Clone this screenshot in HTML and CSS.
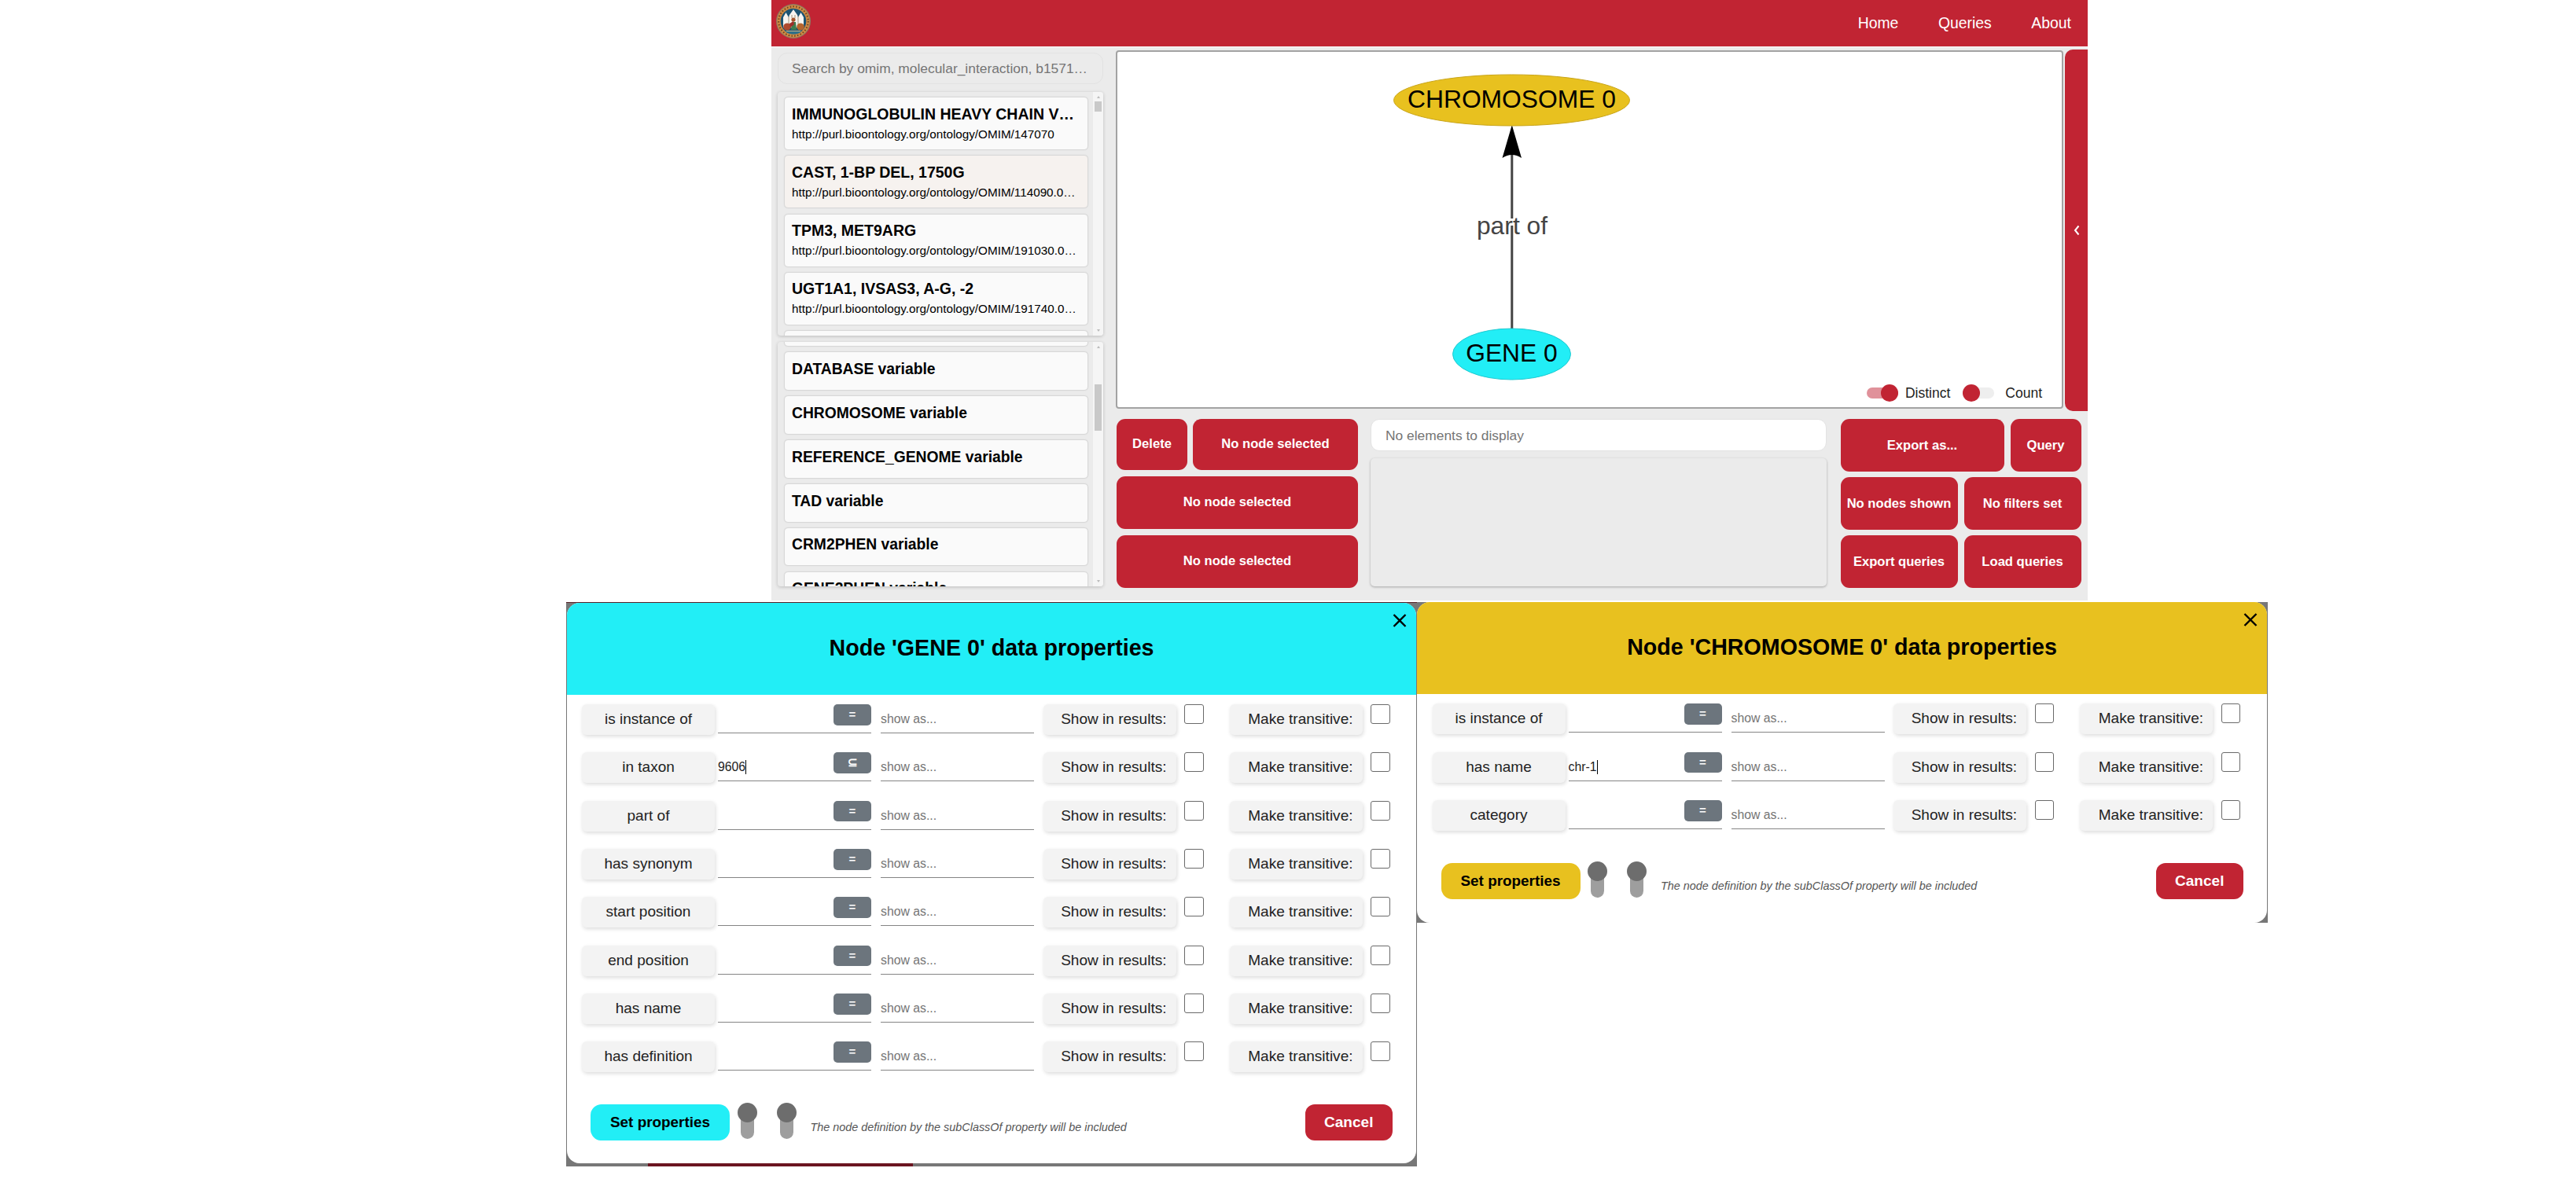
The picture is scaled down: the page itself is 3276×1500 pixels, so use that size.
FILE: index.html
```html
<!DOCTYPE html>
<html lang="en">
<head>
<meta charset="utf-8">
<title>Query builder</title>
<link rel="stylesheet" href="styles.css">
</head>
<body>
<div class="app">
  <header class="topbar">
    <svg class="logo" viewBox="0 0 44 44">
      <circle cx="22" cy="22" r="22" fill="#8d7a63"/>
      <circle cx="22" cy="22" r="20.8" fill="#d08a42"/>
      <circle cx="22" cy="22" r="18.8" fill="none" stroke="#6b4526" stroke-width="2" stroke-dasharray="1.6 2.2"/>
      <circle cx="22" cy="22" r="16.3" fill="#1d5573"/>
      <path d="M9 30V17l3.500-6 3.500 6 1-3 5-7 5 7 1 3 3.500-6 3.500 6v13z" fill="#f7f5f0"/>
      <path d="M16 16v10M28 16v10M20 14v4M24 14v4" stroke="#a9967c" stroke-width="1"/>
      <circle cx="22" cy="20" r="2.600" fill="#a5562c"/>
      <ellipse cx="14" cy="29" rx="4.800" ry="4.500" fill="#b04a2e"/>
      <ellipse cx="31" cy="29" rx="4.800" ry="4.500" fill="#b5662e"/>
      <path d="M19 33l1-10h5l1 10z" fill="#3f7d4e"/>
      <path d="M17 25l5-3 1 4-5 4z" fill="#9e2f2a"/>
      <path d="M11 34h22c-3 3.500-6 4.500-11 4.500s-8-1-11-4.500z" fill="#2f7088"/>
      <path d="M13 34.500h18" stroke="#c9b48a" stroke-width="1"/>
    </svg>
    <nav class="menu"><a>Home</a><a>Queries</a><a>About</a></nav>
  </header>
  <div class="workspace">
    <aside class="sidebar">
      <div class="search">Search by omim, molecular_interaction, b1571…</div>
      <div class="list results">
        <div class="cards">
          <div class="card"><b>IMMUNOGLOBULIN HEAVY CHAIN V…</b><span>http://purl.bioontology.org/ontology/OMIM/147070</span></div>
          <div class="card hover"><b>CAST, 1-BP DEL, 1750G</b><span>http://purl.bioontology.org/ontology/OMIM/114090.0…</span></div>
          <div class="card"><b>TPM3, MET9ARG</b><span>http://purl.bioontology.org/ontology/OMIM/191030.0…</span></div>
          <div class="card"><b>UGT1A1, IVSAS3, A-G, -2</b><span>http://purl.bioontology.org/ontology/OMIM/191740.0…</span></div>
          <div class="card"></div>
        </div>
        <div class="scroll"><i class="up"></i><i class="thumb"></i><i class="down"></i></div>
      </div>
      <div class="list variables">
        <div class="cards">
          <div class="card"></div>
          <div class="card"><b>DATABASE variable</b></div>
          <div class="card"><b>CHROMOSOME variable</b></div>
          <div class="card"><b>REFERENCE_GENOME variable</b></div>
          <div class="card"><b>TAD variable</b></div>
          <div class="card"><b>CRM2PHEN variable</b></div>
          <div class="card"><b>GENE2PHEN variable</b></div>
        </div>
        <div class="scroll"><i class="up"></i><i class="thumb"></i><i class="down"></i></div>
      </div>
    </aside>
    <main class="main">
      <div class="stage">
        <div class="canvas">
          <svg class="graph" viewBox="1419 64 1205 456">
            <path d="M1922.8 196V279M1922.8 288V419" stroke="#444" stroke-width="3"/>
            <path d="M1922.8 160L1935 202Q1922.8 194 1910.5 202Z" fill="#000"/>
            <ellipse cx="1922.500" cy="128.500" rx="150" ry="32.500" fill="#e8c11f" stroke="#c9a51a"/>
            <ellipse cx="1922.500" cy="451.500" rx="75" ry="32.500" fill="#22eef6" stroke="#1fc9d0"/>
            <text x="1922.500" y="138" font-size="31.800">CHROMOSOME 0</text>
            <text x="1922.500" y="460.500" font-size="31.800">GENE 0</text>
            <text x="1923" y="298.500" font-size="31.800" fill="#444">part of</text>
          </svg>
          <div class="options">
            <i class="switch on"></i><label>Distinct</label>
            <i class="switch"></i><label>Count</label>
          </div>
        </div>
        <div class="drawer"><svg width="8" height="14" viewBox="0 0 8 14"><path d="M6.500 1.500L2 7l4.500 5.500" fill="none" stroke="#fff" stroke-width="2"/></svg></div>
      </div>
      <div class="tools">
        <div class="buttons node-tools">
          <div class="line"><a class="btn small">Delete</a><a class="btn">No node selected</a></div>
          <div class="line"><a class="btn">No node selected</a></div>
          <div class="line"><a class="btn">No node selected</a></div>
        </div>
        <div class="elements">
          <div class="filter">No elements to display</div>
          <div class="empty"></div>
        </div>
        <div class="buttons query-tools">
          <div class="line"><a class="btn">Export as...</a><a class="btn small">Query</a></div>
          <div class="line"><a class="btn">No nodes shown</a><a class="btn">No filters set</a></div>
          <div class="line"><a class="btn">Export queries</a><a class="btn">Load queries</a></div>
        </div>
      </div>
    </main>
  </div>
</div>

<div class="modals">
  <section class="backdrop gene">
    <div class="dialog">
      <div class="title">Node 'GENE 0' data properties
        <svg class="close" viewBox="0 0 18 17"><path d="M1.500 1L16.500 16M16.500 1L1.500 16" stroke="#000" stroke-width="2.400"/></svg></div>
      <div class="rows">
        <div class="row"><span class="chip">is instance of</span><span class="field"><em class="op">=</em></span><span class="field alias">show as...</span><span class="chip flag">Show in results:</span><i class="box"></i><span class="chip flag second">Make transitive:</span><i class="box"></i></div>
        <div class="row"><span class="chip">in taxon</span><span class="field"><span class="caret">9606</span><em class="op">⊆</em></span><span class="field alias">show as...</span><span class="chip flag">Show in results:</span><i class="box"></i><span class="chip flag second">Make transitive:</span><i class="box"></i></div>
        <div class="row"><span class="chip">part of</span><span class="field"><em class="op">=</em></span><span class="field alias">show as...</span><span class="chip flag">Show in results:</span><i class="box"></i><span class="chip flag second">Make transitive:</span><i class="box"></i></div>
        <div class="row"><span class="chip">has synonym</span><span class="field"><em class="op">=</em></span><span class="field alias">show as...</span><span class="chip flag">Show in results:</span><i class="box"></i><span class="chip flag second">Make transitive:</span><i class="box"></i></div>
        <div class="row"><span class="chip">start position</span><span class="field"><em class="op">=</em></span><span class="field alias">show as...</span><span class="chip flag">Show in results:</span><i class="box"></i><span class="chip flag second">Make transitive:</span><i class="box"></i></div>
        <div class="row"><span class="chip">end position</span><span class="field"><em class="op">=</em></span><span class="field alias">show as...</span><span class="chip flag">Show in results:</span><i class="box"></i><span class="chip flag second">Make transitive:</span><i class="box"></i></div>
        <div class="row"><span class="chip">has name</span><span class="field"><em class="op">=</em></span><span class="field alias">show as...</span><span class="chip flag">Show in results:</span><i class="box"></i><span class="chip flag second">Make transitive:</span><i class="box"></i></div>
        <div class="row"><span class="chip">has definition</span><span class="field"><em class="op">=</em></span><span class="field alias">show as...</span><span class="chip flag">Show in results:</span><i class="box"></i><span class="chip flag second">Make transitive:</span><i class="box"></i></div>
      </div>
      <div class="actions"><a class="set">Set properties</a><i class="toggle"></i><i class="toggle"></i><span class="note">The node definition by the subClassOf property will be included</span><a class="cancel">Cancel</a></div>
    </div>
  </section>
  <section class="backdrop chromosome">
    <div class="dialog">
      <div class="title">Node 'CHROMOSOME 0' data properties
        <svg class="close" viewBox="0 0 18 17"><path d="M1.500 1L16.500 16M16.500 1L1.500 16" stroke="#000" stroke-width="2.400"/></svg></div>
      <div class="rows">
        <div class="row"><span class="chip">is instance of</span><span class="field"><em class="op">=</em></span><span class="field alias">show as...</span><span class="chip flag">Show in results:</span><i class="box"></i><span class="chip flag second">Make transitive:</span><i class="box"></i></div>
        <div class="row"><span class="chip">has name</span><span class="field"><span class="caret">chr-1</span><em class="op">=</em></span><span class="field alias">show as...</span><span class="chip flag">Show in results:</span><i class="box"></i><span class="chip flag second">Make transitive:</span><i class="box"></i></div>
        <div class="row"><span class="chip">category</span><span class="field"><em class="op">=</em></span><span class="field alias">show as...</span><span class="chip flag">Show in results:</span><i class="box"></i><span class="chip flag second">Make transitive:</span><i class="box"></i></div>
      </div>
      <div class="actions"><a class="set">Set properties</a><i class="toggle"></i><i class="toggle"></i><span class="note">The node definition by the subClassOf property will be included</span><a class="cancel">Cancel</a></div>
    </div>
  </section>
</div>
</body>
</html>
```
FILE: styles.css
```css
* { box-sizing: border-box; }
:root { --red: #c12433; --panel: #ebebeb; }
body { margin: 0; width: 3276px; height: 1500px; overflow: hidden; background: #fff; color: #000; font-family: "Liberation Sans", Arial, sans-serif; }
i, em { font-style: normal; }

.app { width: 1674px; height: 764px; margin-left: 981px; background: var(--panel); overflow: hidden; }
.topbar { height: 59px; background: var(--red); display: flex; justify-content: space-between; padding: 5px 21px 0 6px; box-shadow: 0 2px 0 #f4f0f0; }
.logo { width: 44px; height: 44px; }
.menu { display: flex; gap: 50.500px; color: #fff; font-size: 19.400px; line-height: 49px; }
.workspace { display: flex; height: 705px; padding-left: 8px; gap: 16px; }

/* Sidebar */
.sidebar { width: 414px; padding-top: 8px; }
.search { height: 40px; padding-left: 17px; border: 1px solid #e2e2e2; border-radius: 12px; color: #757575; font-size: 17.400px; line-height: 39px; white-space: nowrap; }
.list { display: flex; justify-content: space-between; overflow: hidden; border-radius: 4px; box-shadow: 0 1px 4px rgba(0,0,0,.2); padding-left: 9px; }
.results { height: 310px; margin-top: 10px; }
.variables { height: 311px; margin-top: 8px; }
.cards { width: 385px; }
.results .cards { padding-top: 7px; }
.card { height: 66px; margin-bottom: 8.300px; padding: 9.500px 9px 0; border-radius: 4px; background: #fafafa; box-shadow: 0 0 2px rgba(0,0,0,.3); white-space: nowrap; }
.card.hover { background: #f6f2ef; }
.card b { display: block; font-size: 19.500px; line-height: 22px; }
.card span { display: block; font-size: 15.250px; line-height: 20px; margin-top: 5px; }
.variables .cards { margin-top: -42.500px; }
.variables .card { height: 47.500px; margin-bottom: 8.400px; }
.variables .card b { font-size: 19.300px; line-height: 23px; }
.scroll { width: 13px; background: #f5f5f5; display: flex; flex-direction: column; align-items: center; padding: 5px 0; }
.up, .down { width: 0; height: 0; border: 2.500px solid transparent; }
.up { border-top: 0; border-bottom: 3px solid #bbb; }
.down { border-bottom: 0; border-top: 3px solid #bbb; margin-top: auto; }
.thumb { width: 9px; background: #c9c9c9; }
.results .thumb { height: 13px; margin-top: 4px; }
.variables .thumb { height: 59px; margin-top: 46px; }

/* Query graph */
.main { width: 1236px; }
.stage { display: flex; align-items: flex-start; justify-content: space-between; height: 474px; padding-top: 4px; }
.canvas { position: relative; width: 1205px; height: 456px; margin-top: 1px; background: #fff; border: 2px solid #a3a3a3; border-radius: 4px; }
.graph { display: block; width: 1205px; height: 456px; margin: -3px -2px -1px; }
.graph text { text-anchor: middle; }
.options { position: absolute; right: 25px; bottom: 7px; height: 22px; display: flex; align-items: center; font-size: 17.500px; color: #222; line-height: 22px; }
.switch { position: relative; width: 40px; height: 14px; border-radius: 7px; background: #eee; }
.switch.on { background: #e0919a; }
.switch::after { content: ""; position: absolute; left: 0; top: -4px; width: 22px; height: 22px; border-radius: 50%; background: var(--red); }
.switch.on::after { left: 18px; }
.options label { margin: 0 16px 0 9px; }
.options label:last-child { margin: 0 0 0 14px; }
.drawer { width: 29px; height: 460px; border-radius: 10px 0 0 10px; background: var(--red); display: flex; align-items: center; justify-content: center; padding-left: 1px; }

/* Tool area under the graph */
.tools { display: flex; }
.buttons { display: flex; flex-direction: column; gap: 8px; color: #fff; font-size: 16.600px; font-weight: bold; }
.node-tools { width: 307px; margin-left: 1px; }
.query-tools { width: 306px; gap: 7px; margin-left: 17.500px; }
.line { display: flex; gap: 7px; height: 67px; }
.node-tools .line:first-child { height: 64.500px; }
.query-tools .line { gap: 8px; }
.btn { flex: 1; display: flex; align-items: center; justify-content: center; border-radius: 11px; background: var(--red); white-space: nowrap; }
.btn.small { flex: 0 0 90px; }
.elements { width: 580px; margin-left: 16px; }
.filter { height: 41px; padding-left: 18px; border-radius: 11px; background: #fff; border: 1px solid #e3e3e3; font-size: 17.400px; line-height: 40px; color: #757575; }
.empty { height: 163px; margin-top: 9px; border-radius: 5px; box-shadow: 0 1px 3px rgba(0,0,0,.3); }

/* Node property dialogs */
.modals { display: flex; align-items: flex-start; margin: 2px 0 0 720px; }
.backdrop { width: 1082px; background: #777; }
.gene { --node: #22eef6; --pitch: 61.350px; height: 718px; padding: 0 1px 4px; border-top: 1px solid #552229; background: linear-gradient(#6b1520, #6b1520) 104px 100% / 337px 4px no-repeat #777; }
.chromosome { --node: #e8c11f; --pitch: 61.700px; height: 408px; padding-right: 1px; }
.dialog { height: 100%; overflow: hidden; background: #fff; border-radius: 16px; }
.title { position: relative; height: 116.500px; background: var(--node); text-align: center; font-size: 28.650px; font-weight: bold; line-height: 115px; }
.close { position: absolute; right: 12.500px; top: 13.500px; width: 18px; height: 17px; }
.rows { padding: 12.500px 0 0 19px; }
.row { display: flex; height: var(--pitch); font-size: 19.050px; color: #222; }
.chip { width: 169px; height: 39px; border-radius: 6px; background: #f3f3f3; box-shadow: 1px 2px 5px rgba(0,0,0,.14); text-align: center; line-height: 38px; }
.field { display: flex; justify-content: space-between; width: 195px; height: 37px; margin-left: 4px; border-bottom: 1px solid #858585; font-size: 15.800px; line-height: 37px; }
.alias { margin-left: 12px; color: #757575; }
.caret { height: 18px; margin-top: 10px; line-height: 18px; border-right: 1px solid #000; }
.op { width: 48px; height: 26.500px; margin-left: auto; border-radius: 5px; background: #6c757d; color: #fff; text-align: center; font-size: 15px; font-weight: bold; line-height: 25px; }
.flag { margin-left: 11.500px; padding-right: 12px; text-align: right; }
.flag.second { margin-left: 33px; }
.box { width: 24.500px; height: 25px; margin-left: 10.500px; border: 1px solid #6a6a6a; border-radius: 3px; background: #fff; }
.chromosome .rows { padding-left: 19.500px; }
.chromosome .actions { margin-left: 30.500px; }
.actions { display: flex; height: 46px; margin: 18.500px 30px 0; }
.chromosome .actions { margin-top: 17.500px; }
.set, .cancel { width: 177px; height: 46px; border-radius: 14px; background: var(--node); text-align: center; font-size: 18.900px; font-weight: bold; line-height: 45px; }
.cancel { width: 111.500px; margin-left: auto; background: var(--red); color: #fff; border-radius: 12px; font-size: 19.050px; }
.toggle { position: relative; width: 17px; height: 40px; margin: 4px 0 0 13.500px; border-radius: 9px; background: #9e9e9e; }
.toggle::before { content: ""; position: absolute; left: -4px; top: -6px; width: 25px; height: 25px; border-radius: 50%; background: #6d6d6d; }
.toggle + .toggle { margin-left: 33px; }
.note { margin-left: 22px; font-size: 14.400px; font-style: italic; color: #555; line-height: 59px; white-space: nowrap; }
```
